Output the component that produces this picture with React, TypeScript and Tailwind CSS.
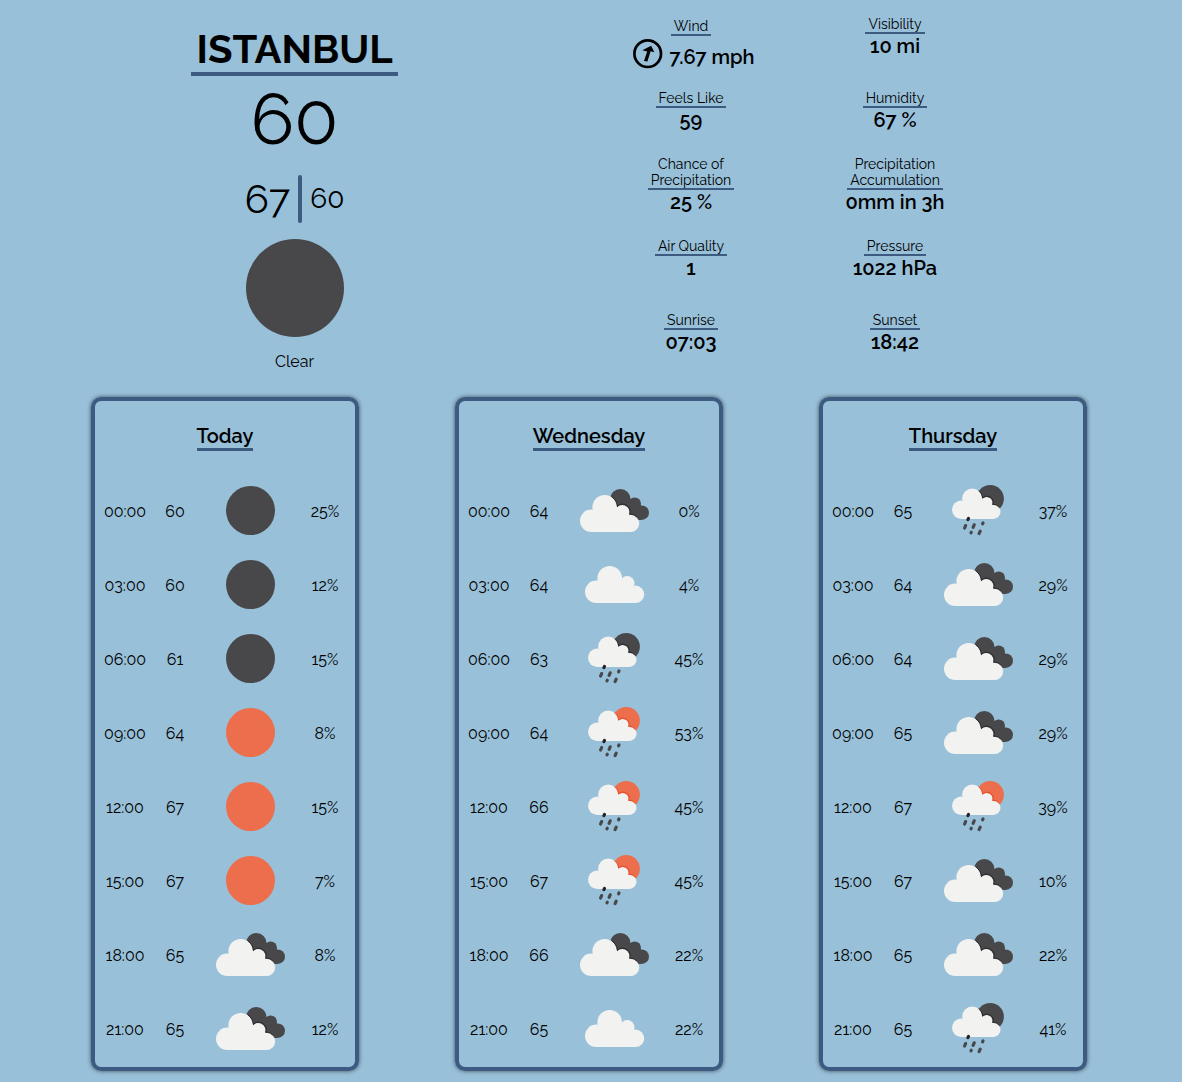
import type { ReactNode } from "react";

type Icon = "night" | "sun" | "cloud" | "clouds" | "rainNight" | "rainSun";
type Row = [time: string, temp: number, icon: Icon, rain: number];

const days: { name: string; rows: Row[] }[] = [
  {
    name: "Today",
    rows: [
      ["00:00", 60, "night", 25],
      ["03:00", 60, "night", 12],
      ["06:00", 61, "night", 15],
      ["09:00", 64, "sun", 8],
      ["12:00", 67, "sun", 15],
      ["15:00", 67, "sun", 7],
      ["18:00", 65, "clouds", 8],
      ["21:00", 65, "clouds", 12],
    ],
  },
  {
    name: "Wednesday",
    rows: [
      ["00:00", 64, "clouds", 0],
      ["03:00", 64, "cloud", 4],
      ["06:00", 63, "rainNight", 45],
      ["09:00", 64, "rainSun", 53],
      ["12:00", 66, "rainSun", 45],
      ["15:00", 67, "rainSun", 45],
      ["18:00", 66, "clouds", 22],
      ["21:00", 65, "cloud", 22],
    ],
  },
  {
    name: "Thursday",
    rows: [
      ["00:00", 65, "rainNight", 37],
      ["03:00", 64, "clouds", 29],
      ["06:00", 64, "clouds", 29],
      ["09:00", 65, "clouds", 29],
      ["12:00", 67, "rainSun", 39],
      ["15:00", 67, "clouds", 10],
      ["18:00", 65, "clouds", 22],
      ["21:00", 65, "rainNight", 41],
    ],
  },
];

const DARK = "#48484a";
const ORANGE = "#ec6e4c";

/* Light cloud, 59 x 37, with its origin at the top left corner. */
function Cloud({ transform }: { transform: string }) {
  return (
    <g fill="#f2f2f0" transform={transform}>
      <circle cx="11.2" cy="25.8" r="11.2" />
      <circle cx="24.7" cy="12.3" r="12.3" />
      <circle cx="42.2" cy="17.4" r="7.3" />
      <circle cx="50.5" cy="28.3" r="8.7" />
      <path d="M11.2 37V25.8L24.7 12.3L42.2 17.4L50.5 28.3V37Z" />
    </g>
  );
}

function WeatherIcon({ icon }: { icon: Icon }) {
  const rainy = icon === "rainNight" || icon === "rainSun";
  const disc = icon === "sun" || icon === "rainSun" ? ORANGE : DARK;
  return (
    <svg viewBox="0 0 100 74" className="block h-[74px] w-full" aria-hidden="true">
      {(icon === "night" || icon === "sun") && <circle cx="50.5" cy="36.5" r="24.5" fill={disc} />}
      {icon === "cloud" && <Cloud transform="translate(21 18)" />}
      {icon === "clouds" && (
        <>
          <g fill={DARK}>
            <circle cx="56.3" cy="25.3" r="10.3" />
            <circle cx="70.7" cy="29.8" r="6.3" />
            <circle cx="77.7" cy="38.7" r="7.3" />
            <path d="M56 26L66 25L77 31.5V46H62Z" />
          </g>
          <Cloud transform="translate(16 21)" />
          <path
            d="M47.9 23A12.6 12.6 0 0 1 53.3 32.4A7.6 7.6 0 0 1 65.8 40.2A9 9 0 0 1 73.6 43.8"
            fill="none"
            stroke="#202022"
            strokeWidth="0.8"
          />
        </>
      )}
      {rainy && (
        <>
          <circle cx="62.2" cy="24.7" r="13.7" fill={disc} />
          <Cloud transform="translate(24 14.6) scale(.82)" />
          <path
            d="M50.6 16.6A10.3 10.3 0 0 1 54.6 23.9A6.2 6.2 0 0 1 64.8 30.3A7.4 7.4 0 0 1 71.2 33.3"
            fill="none"
            stroke={icon === "rainSun" ? "#e5401f" : "#202022"}
            strokeWidth="0.8"
          />
          <g stroke={DARK} strokeWidth="3.2" strokeLinecap="round">
            <path d="M40.5 44.4L39.9 45.6" stroke="#222224" />
            <path d="M37.6 51.6L36.6 54" />
            <path d="M46.2 50.8L45.1 53.3" />
            <path d="M55 49L54.6 49.8" />
            <path d="M43.3 58.3L43 58.8" />
            <path d="M52.2 57.2L51.1 59.6" />
          </g>
        </>
      )}
    </svg>
  );
}

function Metric({ label, children, className = "" }: { label: ReactNode; children: ReactNode; className?: string }) {
  return (
    <div className={`flex flex-col items-center text-center ${className}`}>
      <dt className="border-b-2 border-[#3d5a80] px-[3px] text-sm leading-4">{label}</dt>
      <dd className="text-xl leading-6 font-semibold">{children}</dd>
    </div>
  );
}

function WindArrow() {
  return (
    <svg viewBox="0 0 30 30" className="mx-1.5 size-[30px]" role="img" aria-label="Wind direction">
      <circle cx="14.7" cy="14.7" r="13.3" fill="none" stroke="#000" strokeWidth="2.7" />
      <path d="M11 22L14.2 12.4L9.3 11.3L18.2 6.7L21.3 13.2L17.6 12.3L14.4 22.6Z" />
    </svg>
  );
}

export default function App() {
  return (
    <main className="min-h-screen bg-[#98c0d9] pr-1 pb-[11px] font-[Raleway,Lato,sans-serif] text-black oldstyle-nums">
      <div className="grid grid-cols-2">
        <section className="flex flex-col items-center pt-[26px]">
          <h1 className="border-b-4 border-[#3d5a80] px-[5px] text-[40px] leading-[46px] font-bold">ISTANBUL</h1>
          <p className="mt-px text-[72px] leading-[84px]">60</p>
          <div className="mt-[14px] flex h-12 items-center gap-2">
            <span className="text-[40px] leading-[48px]">67</span>
            <span className="h-12 w-1 rounded-sm bg-[#3d5a80]" />
            <span className="text-[28px] leading-8">60</span>
          </div>
          <div className="mt-4 size-[98px] rounded-full bg-[#48484a]" />
          <p className="mt-[13px] text-base leading-6">Clear</p>
        </section>
        <dl className="grid w-[408px] auto-rows-[74px] grid-cols-2 content-start items-center">
          <Metric label="Wind" className="pt-3">
            <span className="flex items-end pt-[3px]">
              <WindArrow />
              <span>7.67 mph</span>
            </span>
          </Metric>
          <Metric label="Visibility">10 mi</Metric>
          <Metric label="Feels Like">59</Metric>
          <Metric label="Humidity">67 %</Metric>
          <Metric label={<>Chance of<br />Precipitation</>}>25 %</Metric>
          <Metric label={<>Precipitation<br />Accumulation</>}>0mm in 3h</Metric>
          <Metric label="Air Quality">1</Metric>
          <Metric label="Pressure">1022 hPa</Metric>
          <Metric label="Sunrise">07:03</Metric>
          <Metric label="Sunset">18:42</Metric>
        </dl>
      </div>
      <div className="mt-[23px] flex flex-wrap justify-center gap-x-24 gap-y-8">
        {days.map((day) => (
          <section
            key={day.name}
            className="w-[268px] rounded-[10px] border-4 border-[#3d5a80] px-[5px] pb-px shadow-[0_0_4px_rgba(0,0,0,0.6)]"
          >
            <div className="flex h-[73px] justify-center pt-[23px]">
              <h2 className="h-fit border-b-3 border-[#3d5a80] text-xl leading-6 font-semibold">{day.name}</h2>
            </div>
            <table className="w-full table-fixed text-center text-base" aria-label={`${day.name} forecast`}>
              <colgroup>
                <col className="w-1/5" />
                <col className="w-1/5" />
                <col className="w-2/5" />
                <col className="w-1/5" />
              </colgroup>
              <tbody>
                {day.rows.map(([time, temp, icon, rain]) => (
                  <tr key={time} className="h-[74px]">
                    <td className="pt-0.5">{time}</td>
                    <td className="pt-0.5">{temp}</td>
                    <td><WeatherIcon icon={icon} /></td>
                    <td className="pt-0.5">{rain}%</td>
                  </tr>
                ))}
              </tbody>
            </table>
          </section>
        ))}
      </div>
    </main>
  );
}
